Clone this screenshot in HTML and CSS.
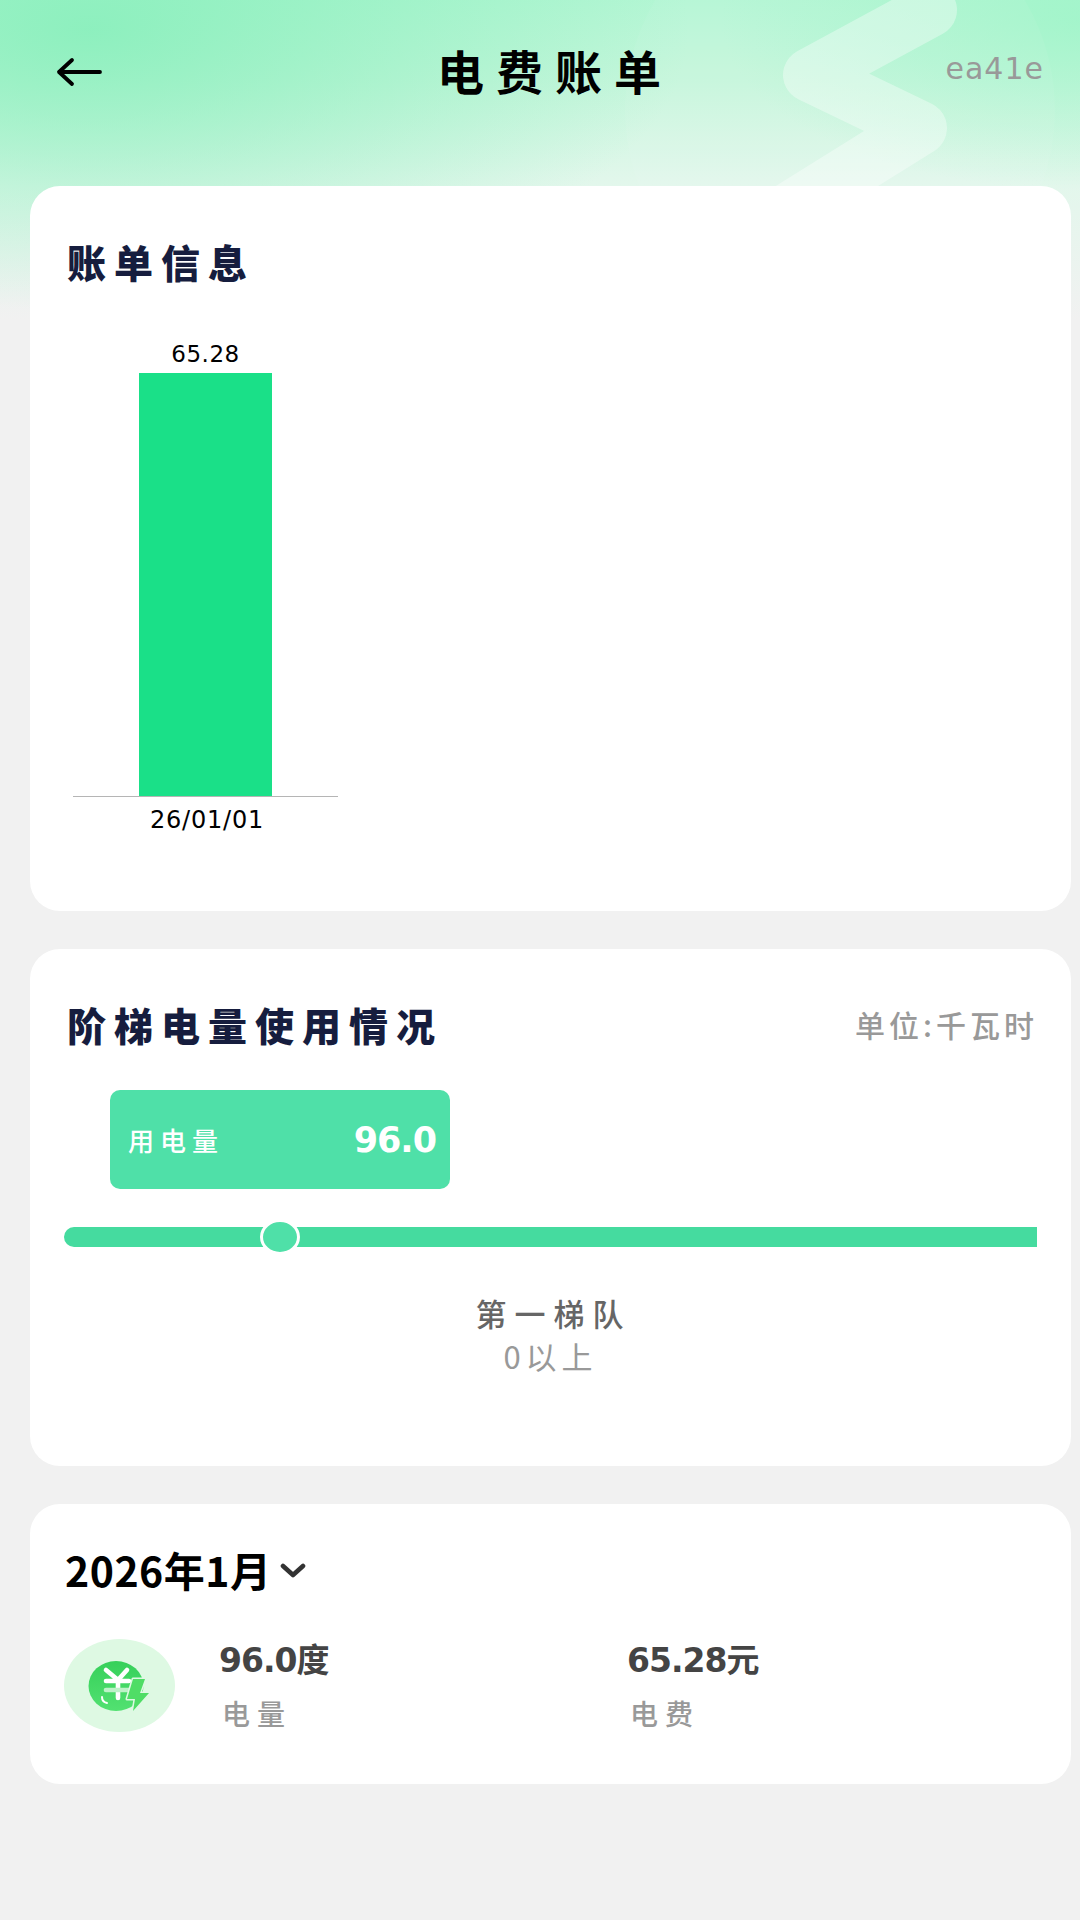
FILE: index.html
```html
<!DOCTYPE html>
<html lang="zh-CN">
<head>
<meta charset="utf-8">
<title>电费账单</title>
<link rel="stylesheet" href="styles.css">
</head>
<body>
<div class="page">
  <div class="bg">
    <svg class="bg-art" width="1080" height="320" viewBox="0 0 1080 320">
      <circle cx="840" cy="110" r="215" fill="#ffffff" fill-opacity="0.05"/>
      <polyline points="930,10 810,75 920,128 790,209" fill="none" stroke="#ffffff" stroke-opacity="0.36" stroke-width="54" stroke-linecap="round" stroke-linejoin="round"/>
    </svg>
  </div>
  <header class="topbar">
    <svg class="back" width="46" height="30" viewBox="0 0 46 30"><path d="M44 15H3M16 3 3 15l13 12" fill="none" stroke="#000" stroke-width="3.8" stroke-linecap="round" stroke-linejoin="round"/></svg>
    <h1 class="title">电费账单</h1>
    <span class="code">ea41e</span>
  </header>
  <main class="cards">
    <section class="card card-chart">
      <h2 class="heading">账单信息</h2>
      <div class="chart">
        <div class="chart-value">65.28</div>
        <div class="chart-bar"></div>
        <div class="chart-axis"></div>
        <div class="chart-label">26/01/01</div>
      </div>
    </section>
    <section class="card card-tier">
      <div class="tier-head">
        <h2 class="heading">阶梯电量使用情况</h2>
        <span class="unit">单位:千瓦时</span>
      </div>
      <div class="usage-box">
        <span class="usage-label">用电量</span>
        <span class="usage-value">96.0</span>
      </div>
      <div class="track"><span class="knob"></span></div>
      <div class="tier-name">第一梯队</div>
      <div class="tier-range">0以上</div>
    </section>
    <section class="card card-month">
      <div class="month">
        <span class="month-text">2026年1月</span>
        <svg class="chevron" width="26" height="15" viewBox="0 0 26 15"><path d="M3 3l10 9 10-9" fill="none" stroke="#333" stroke-width="4.6" stroke-linecap="round" stroke-linejoin="round"/></svg>
      </div>
      <div class="stats">
        <svg class="stat-icon" width="111" height="93" viewBox="0 0 111 93">
          <defs><linearGradient id="g" x1="0" y1="0" x2="0" y2="1"><stop offset="0" stop-color="#36d05a"/><stop offset="1" stop-color="#52e171"/></linearGradient></defs>
          <ellipse cx="55.5" cy="46.5" rx="55.5" ry="46.5" fill="#def9e3"/>
          <ellipse cx="52" cy="47" rx="27.5" ry="25" fill="url(#g)"/>
          <path d="M42 31l12 10 9-10M54 41v18M42 42h23" fill="none" stroke="#fff" stroke-width="4.6" stroke-linecap="round" stroke-linejoin="round"/>
          <path d="M42 51h23" fill="none" stroke="#bdf2c8" stroke-width="4.6" stroke-linecap="round"/>
          <path d="M38 58q0 5 5 6" fill="none" stroke="#fff" stroke-width="2" stroke-linecap="round"/>
          <path d="M69 40h12l-5 14h9L69 72l2-12h-8z" fill="#4fdd66" stroke="#def9e3" stroke-width="3" stroke-linejoin="round" paint-order="stroke"/>
        </svg>
        <div class="stat stat-power">
          <div class="stat-value">96.0度</div>
          <div class="stat-label">电量</div>
        </div>
        <div class="stat stat-fee">
          <div class="stat-value">65.28元</div>
          <div class="stat-label">电费</div>
        </div>
      </div>
    </section>
  </main>
</div>
</body>
</html>
```
FILE: styles.css
```css
* { box-sizing: border-box; margin: 0; padding: 0; }
html, body { width: 1080px; height: 1920px; overflow: hidden; }
body {
  background: #f1f1f1;
  font-family: "Noto Sans CJK SC", "Noto Sans", sans-serif;
  color: #000;
}
.page { position: relative; width: 1080px; height: 1920px; }
.bg {
  position: absolute; left: 0; top: 0; width: 1080px; height: 320px;
  background:
    radial-gradient(ellipse 600px 280px at 90px 30px, rgba(130,238,184,.8), rgba(130,238,184,0)),
    radial-gradient(ellipse 360px 170px at 1080px 20px, rgba(150,244,196,.6), rgba(150,244,196,0)),
    linear-gradient(180deg, #b4f6d4 0, #c6f6dc 80px, #e3f7ec 186px, #f1f1f1 320px);
}
.bg-art { display: block; }
.topbar {
  position: relative; height: 186px; display: flex; align-items: flex-start;
  padding: 0 36px 0 56px;
}
.back { margin-top: 57px; flex: none; }
.title {
  position: absolute; left: 0; right: 0; top: 40px; text-align: center;
  font-size: 47px; line-height: 60px; font-weight: 700; letter-spacing: 12px; padding-left: 30px;
}
.code {
  margin-left: auto; margin-top: 51px; font-family: "DejaVu Sans", sans-serif;
  font-size: 30px; line-height: 36px; color: #999; letter-spacing: 1px;
}
.cards { position: relative; display: flex; flex-direction: column; gap: 38px; padding-left: 30px; }
.card { width: 1041px; background: #fff; border-radius: 30px; }
.card-chart { height: 725px; padding: 51px 0 0 37px; }
.card-tier { height: 517px; padding: 51px 0 0 34px; }
.card-month { height: 280px; padding: 41px 0 0 35px; }
.heading { font-size: 39px; line-height: 48px; font-weight: 900; letter-spacing: 8px; color: #161d3e; white-space: nowrap; }
.chart { width: 265px; margin: 58px 0 0 6px; display: flex; flex-direction: column; align-items: center; }
.chart-value { font-family: "DejaVu Sans", sans-serif; font-size: 23px; line-height: 22px; height: 30px; letter-spacing: .5px; }
.chart-bar { width: 133px; height: 423px; background: #1ae088; }
.chart-axis { width: 265px; height: 1px; background: #b5b5b5; }
.chart-label { font-family: "DejaVu Sans", sans-serif; font-size: 24px; line-height: 28px; margin-top: 9px; padding-left: 3px; letter-spacing: .8px; }
.tier-head { display: flex; justify-content: space-between; align-items: center; padding: 0 33px 0 3px; }
.unit { font-size: 30px; line-height: 36px; color: #999; letter-spacing: 4px; font-weight: 500; }
.usage-box {
  width: 340px; height: 99px; margin: 42px 0 0 46px; background: #4fe0a8; border-radius: 10px;
  display: flex; align-items: center; justify-content: space-between; padding: 0 14px 0 18px; color: #fff;
}
.usage-label { font-size: 26px; letter-spacing: 6px; font-weight: 500; }
.usage-value { font-family: "DejaVu Sans", sans-serif; font-size: 35px; font-weight: 700; letter-spacing: -1px; }
.track {
  position: relative; width: 973px; height: 20px; margin-top: 38px; background: #45db9f;
  border-radius: 10px 0 0 10px;
}
.knob {
  position: absolute; left: 196px; top: -8px; width: 40px; height: 36px; border-radius: 50%;
  background: #4fe0a8; border: 3px solid #fff;
}
.tier-name { margin-top: 46px; padding-left: 6px; text-align: center; width: 973px; font-size: 31px; line-height: 40px; letter-spacing: 8px; color: #666; font-weight: 500; }
.tier-range { margin-top: 3px; text-align: center; width: 973px; font-size: 31px; line-height: 40px; letter-spacing: 5px; color: #999; }
.month { display: flex; align-items: center; gap: 9px; height: 48px; }
.month-text { font-family: "Noto Sans CJK SC", sans-serif; font-size: 41px; line-height: 48px; font-weight: 700; white-space: nowrap; letter-spacing: .5px; }
.chevron { flex: none; margin-top: 2px; }
.stats { position: relative; display: flex; margin: 46px 0 0 -1px; }
.stat-icon { flex: none; }
.stat { position: absolute; top: 0; }
.stat-power { left: 155px; }
.stat-fee { left: 563px; }
.stat-value { font-family: "DejaVu Sans", "Noto Sans CJK SC", sans-serif; font-size: 33px; line-height: 44px; font-weight: 700; color: #444; white-space: nowrap; letter-spacing: -1px; }
.stat-label { margin: 12px 0 0 3px; font-size: 28px; line-height: 36px; font-weight: 500; letter-spacing: 7px; color: #999; }
```
